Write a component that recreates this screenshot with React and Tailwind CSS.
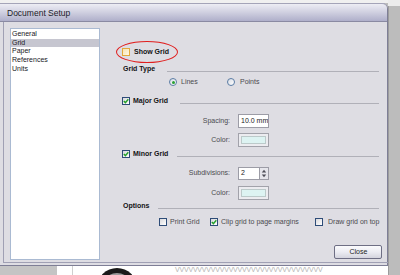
import React from 'react';

const font = "font-['Liberation_Sans',Arial,sans-serif]";

function Check({ checked, hover }) {
  return (
    <span
      className={
        hover
          ? 'w-[8px] h-[8px] shrink-0 border border-[#e2a93c] bg-gradient-to-br from-[#f7e3b0] to-[#fff8e4] flex items-center justify-center'
          : 'w-[8px] h-[8px] shrink-0 border border-[#2e4c78] bg-gradient-to-br from-[#d8d8dc] to-white flex items-center justify-center'
      }
    >
      {checked && (
        <svg width="6" height="6" viewBox="0 0 6 6">
          <path d="M0.8 3 L2.4 4.6 L5.3 1.2" fill="none" stroke="#22a02a" strokeWidth="1.4" />
        </svg>
      )}
    </span>
  );
}

function Radio({ on }) {
  return (
    <span className="w-[8px] h-[8px] shrink-0 rounded-full border border-[#5a7ca4] bg-gradient-to-br from-[#d8dce4] to-white flex items-center justify-center">
      {on && <span className="w-[3px] h-[3px] rounded-full bg-[#2aa032]" />}
    </span>
  );
}

function Header({ children, mt }) {
  return (
    <div className={`h-[10px] flex items-center ${mt}`}>
      {children}
    </div>
  );
}

function Rule({ ml }) {
  return <div className={`flex-1 h-[1px] bg-[#b0b0b8] mt-[5px] ${ml}`} />;
}

function FormRow({ label, mt, children }) {
  return (
    <div className={`h-[14px] flex items-center ${mt}`}>
      <span className="w-[108px] text-right text-[7px] text-[#4a4a4e] whitespace-nowrap">{label}</span>
      <div className="ml-[8px] flex">{children}</div>
    </div>
  );
}

function Swatch() {
  return (
    <div className="w-[31px] h-[14px] border border-[#a2a2aa] bg-[#ececf0] p-[2px]">
      <div className="w-full h-full bg-[#ddf3f2] border border-[#bccaca]" />
    </div>
  );
}

export default function App() {
  const items = ['General', 'Grid', 'Paper', 'References', 'Units'];
  return (
    <div className={`w-[400px] h-[275px] flex overflow-hidden bg-[#bdbdbd] whitespace-nowrap ${font}`}>
      <div className="w-[388px] flex flex-col">
        <div className="h-[3px] bg-[#f0f0f0]" />
        <div className="h-[263px] flex flex-col border-r border-b border-[#7e7e96] rounded-tr-[6px] bg-[#dedde3]">
          <div className="h-[19px] rounded-tr-[5px] border-t border-[#a4a4b8] border-b border-b-[#8a8aa2] bg-gradient-to-b from-[#ededf4] via-[#cfcfe0] to-[#afafca] flex items-center pl-[7px] pt-[1px]">
            <span className="text-[8.5px] text-[#1c1c28]">Document Setup</span>
          </div>
          <div className="flex-1 flex pl-[3px] pr-[1px] pb-[2px]">
            <div className="flex-1 flex border-l border-r border-b border-[#a0a0b4]">
              <div className="ml-[6px] mt-[6px] w-[90px] h-[232px] bg-white border border-[#aabad2] pt-[1px]">
                {items.map((t) => (
                  <div
                    key={t}
                    className={
                      t === 'Grid'
                        ? 'h-[8.7px] leading-[8.7px] text-[7px] pl-[1px] text-[#18181e] bg-[#c6c6d0]'
                        : 'h-[8.7px] leading-[8.7px] text-[7px] pl-[1px] text-[#18181e]'
                    }
                  >
                    {t}
                  </div>
                ))}
              </div>

              <div className="flex-1 flex flex-col ml-[22px] mr-[9px]">
                <div className="relative h-[10px] mt-[25px] flex items-center">
                  <Check hover />
                  <span className="ml-[4px] text-[7px] font-bold text-[#141414]">Show Grid</span>
                  <div className="absolute left-[-6px] top-[-6px] w-[62px] h-[22px] rounded-[50%] border-[1.6px] border-[#e01e1e]" />
                </div>

                <Header mt="mt-[7px]">
                  <span className="ml-[1px] text-[7px] font-bold text-[#141414]">Grid Type</span>
                  <Rule ml="ml-[12px]" />
                </Header>

                <div className="h-[10px] mt-[3px] flex items-center pl-[47px]">
                  <div className="w-[58px] flex items-center">
                    <Radio on />
                    <span className="ml-[4px] text-[7px] text-[#4a4a4e]">Lines</span>
                  </div>
                  <Radio />
                  <span className="ml-[5px] text-[7px] text-[#4a4a4e]">Points</span>
                </div>

                <Header mt="mt-[9px]">
                  <Check checked />
                  <span className="ml-[3px] text-[7px] font-bold text-[#141414]">Major Grid</span>
                  <Rule ml="ml-[12px]" />
                </Header>

                <FormRow label="Spacing:" mt="mt-[8px]">
                  <div className="w-[31px] h-[14px] border border-[#9c9ca6] bg-white text-[7px] text-[#222] pl-[2px] flex items-center whitespace-nowrap overflow-hidden">
                    10.0 mm
                  </div>
                </FormRow>

                <FormRow label="Color:" mt="mt-[5px]">
                  <Swatch />
                </FormRow>

                <Header mt="mt-[2px]">
                  <Check checked />
                  <span className="ml-[3px] text-[7px] font-bold text-[#141414]">Minor Grid</span>
                  <Rule ml="ml-[9px]" />
                </Header>

                <FormRow label="Subdivisions:" mt="mt-[7px]">
                  <div className="w-[21px] h-[13px] border border-[#9c9ca6] border-r-0 bg-white text-[7px] text-[#222] pl-[2px] flex items-center">
                    2
                  </div>
                  <div className="w-[10px] h-[13px] border border-[#9c9ca6] bg-[#e6e6ec] flex flex-col items-center justify-center">
                    <svg width="6" height="9" viewBox="0 0 6 9">
                      <path d="M3 0.8 L5.2 3.6 L0.8 3.6 Z" fill="#4e4e58" />
                      <path d="M3 8.2 L5.2 5.4 L0.8 5.4 Z" fill="#4e4e58" />
                    </svg>
                  </div>
                </FormRow>

                <FormRow label="Color:" mt="mt-[6px]">
                  <Swatch />
                </FormRow>

                <Header mt="mt-[1px]">
                  <span className="ml-[1px] text-[7px] font-bold text-[#141414]">Options</span>
                  <Rule ml="ml-[9px]" />
                </Header>

                <div className="h-[10px] mt-[6px] flex items-center pl-[37px]">
                  <div className="w-[51px] flex items-center">
                    <Check />
                    <span className="ml-[3px] text-[7px] text-[#4a4a4e]">Print Grid</span>
                  </div>
                  <div className="w-[105px] flex items-center">
                    <Check checked />
                    <span className="ml-[3px] text-[7px] text-[#4a4a4e]">Clip grid to page margins</span>
                  </div>
                  <Check />
                  <span className="ml-[5px] text-[7px] text-[#4a4a4e]">Draw grid on top</span>
                </div>

                <div className="mt-[18px] flex justify-end">
                  <button className="w-[48px] h-[14px] -mr-[3px] rounded-[2px] border border-[#6e6e84] bg-gradient-to-b from-[#fbfbfd] via-[#ececf2] to-[#d4d4de] text-[7px] text-[#222] flex items-center justify-center">
                    Close
                  </button>
                </div>
              </div>
            </div>
          </div>
        </div>

        <div className="flex-1 flex">
          <div className="w-[57px] bg-[#c4c4c4]" />
          <div className="flex-1 bg-white flex">
            <div className="w-[15px]" />
            <div className="w-[1px] bg-[#cfcfcf]" />
            <svg width="40" height="9" viewBox="0 0 40 9" className="ml-[24px]">
              <circle cx="20" cy="22" r="20" fill="#1a1a1a" />
              <circle cx="20" cy="22" r="15" fill="#9a9a9a" />
              <circle cx="20" cy="22" r="13" fill="#2a2a2a" />
            </svg>
            <div className="ml-[38px] text-[7px] leading-[8px] text-[#b4b4b4] tracking-[-0.2px]">
              VVVVVVVVVVVVVVVVVVVVVVVVVVVVVVVVV
            </div>
          </div>
        </div>
      </div>
      <div className="flex-1 flex flex-col">
        <div className="h-[6px] bg-[#ececec]" />
        <div className="flex-1 bg-[#bcbcbc] border-l border-[#9c9c9c]" />
      </div>
    </div>
  );
}
